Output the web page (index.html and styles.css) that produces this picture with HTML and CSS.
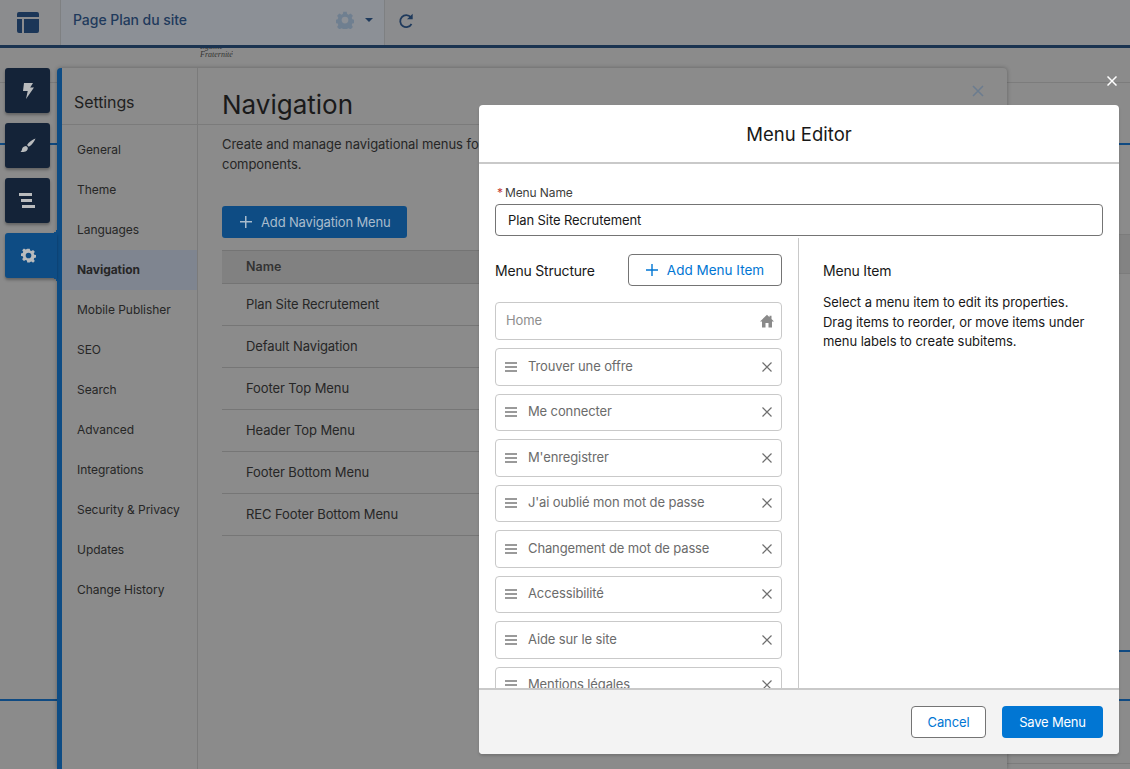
FILE: index.html
```html
<!DOCTYPE html>
<html lang="en">
<head>
    <meta charset="UTF-8">
    <meta name="viewport" content="width=device-width, initial-scale=1.0">
    <title>Menu Editor</title>
    <link rel="stylesheet" href="styles.css">
</head>
<body>

<!-- Barre du haut -->
<header class="topbar">
    <div class="topbar-home">
        <svg width="22" height="21" viewBox="0 0 22 21"><path fill="#1b3658" d="M2 0h18a2 2 0 0 1 2 2v3H0V2a2 2 0 0 1 2-2zM0 7h5v14H2a2 2 0 0 1-2-2zM7 7h15v12a2 2 0 0 1-2 2H7z"/></svg>
    </div>
    <div class="topbar-page">
        <span class="page-title">Page Plan du site</span>
        <svg class="page-gear" width="18" height="18" viewBox="0 0 24 24"><path fill="#6f7f90" fill-rule="evenodd" d="M9.800 1h4.400l.7 3 1.900.9 2.700-1.600 3 3.100-1.600 2.600.8 2 3 .7v4.400l-3 .7-.8 2 1.600 2.600-3 3.100-2.700-1.600-1.900.9-.7 3H9.800l-.7-3-1.900-.9-2.700 1.600-3-3.100 1.600-2.600-.8-2-3-.7v-4.400l3-.7.8-2-1.600-2.600 3-3.100 2.700 1.600 1.900-.9zM12 7.500a4.500 4.500 0 1 0 0 9 4.500 4.500 0 0 0 0-9z"/></svg>
        <span class="page-caret"></span>
    </div>
    <div class="topbar-refresh">
        <svg width="16" height="16" viewBox="0 0 16 16" fill="none"><path stroke="#1f3a5c" stroke-width="1.800" d="M12.800 4.200A6 6 0 1 0 13.500 11"/><path fill="#1f3a5c" d="M14.700 0.700v5.600H9z"/></svg>
    </div>
</header>

<!-- Fond de la page et traits de la maquette -->
<div class="bg-logo">Égalité<br>Fraternité</div>
<div class="bg-band"></div>
<div class="bg-line bg-line-grey" id="line-a"></div>
<div class="bg-line bg-line-grey" id="line-b"></div>
<div class="bg-line bg-line-grey" id="line-c"></div>
<div class="bg-line bg-line-grey" id="line-d"></div>
<div class="bg-line bg-line-blue" id="line-e"></div>
<div class="bg-line bg-line-blue" id="line-f"></div>
<div class="bg-line bg-line-blue" id="line-g"></div>
<div class="bg-line bg-line-blue" id="line-h"></div>
<div class="bg-line bg-line-blue" id="line-i"></div>

<!-- Onglets à gauche -->
<nav class="tabs">
    <div class="tab">
        <svg width="12" height="16" viewBox="0 0 12 16"><path fill="#b9bbbd" d="M2 0h9L8.200 4.500H12L4 16l1.700-8H1z"/></svg>
    </div>
    <div class="tab">
        <svg width="16" height="16" viewBox="0 0 16 16"><path fill="#b9bbbd" d="M15.500 0.500c-1 3-3.600 6.500-6.700 8.300L7 7C9 4 12.500 1.500 15.500 0.500zM6.200 8l1.700 1.700c0 2.500-2 3.800-3.500 4.100-1.200.3-3 .4-3.900.1 1.500-1 1.300-2.200 1.700-3.400C2.700 9 4.500 8 6.200 8z"/></svg>
    </div>
    <div class="tab">
        <span class="tab-lines"><i></i><i></i><i></i></span>
    </div>
    <div class="tab tab-active">
        <svg width="15" height="15" viewBox="0 0 24 24"><path fill="#b9bbbd" fill-rule="evenodd" d="M10 1h4l.6 3.100 2 .8 2.700-1.700 2.800 2.800-1.700 2.700.8 2 2.800.6v4l-2.800.6-.8 2 1.700 2.700-2.800 2.800-2.700-1.700-2 .8L14 23h-4l-.6-3.100-2-.8-2.700 1.700-2.800-2.800 1.700-2.700-.8-2-2.800-.6v-4l2.800-.6.8-2-1.700-2.700 2.800-2.800 2.700 1.700 2-.8zM12 7.500a4.500 4.500 0 1 0 0 9 4.500 4.500 0 0 0 0-9z"/></svg>
    </div>
</nav>

<!-- Panneau Settings (derrière la modale) -->
<section class="settings">
    <div class="settings-head">
        <div class="settings-title">Settings</div>
        <div class="settings-heading">Navigation</div>
        <svg class="settings-close" width="12" height="12" viewBox="0 0 12 12"><path stroke="#6b7c8f" stroke-width="1.500" d="M1 1l10 10M11 1L1 11"/></svg>
    </div>
    <div class="settings-body">
        <ul class="settings-menu">
            <li>General</li>
            <li>Theme</li>
            <li>Languages</li>
            <li class="selected">Navigation</li>
            <li>Mobile Publisher</li>
            <li>SEO</li>
            <li>Search</li>
            <li>Advanced</li>
            <li>Integrations</li>
            <li>Security &amp; Privacy</li>
            <li>Updates</li>
            <li>Change History</li>
        </ul>
        <div class="settings-main">
            <p class="settings-desc">Create and manage navigational menus for your site and components.</p>
            <div class="add-nav">
                <span class="add-nav-plus"></span>
                Add Navigation Menu
            </div>
            <div class="nav-table">
                <div class="nav-table-head">Name</div>
                <div class="nav-row">Plan Site Recrutement</div>
                <div class="nav-row">Default Navigation</div>
                <div class="nav-row">Footer Top Menu</div>
                <div class="nav-row">Header Top Menu</div>
                <div class="nav-row">Footer Bottom Menu</div>
                <div class="nav-row">REC Footer Bottom Menu</div>
            </div>
        </div>
    </div>
</section>

<svg class="modal-close" width="10" height="10" viewBox="0 0 10 10"><path stroke="#fff" stroke-width="1.500" d="M0.500 0.500l9 9M9.500 0.500l-9 9"/></svg>

<!-- Modale Menu Editor -->
<div class="modal">
    <div class="modal-header">Menu Editor</div>
    <div class="modal-body">
        <div class="name-field">
            <label class="name-label"><span class="required">*</span>Menu Name</label>
            <div class="name-input">Plan Site Recrutement</div>
        </div>
        <div class="columns">
            <div class="col-left">
                <div class="structure-head">
                    <span class="structure-title">Menu Structure</span>
                    <div class="btn btn-neutral btn-add">
                        <svg width="12" height="12" viewBox="0 0 12 12"><path stroke="#0176d3" stroke-width="1.400" d="M6 0v12M0 6h12"/></svg>
                        Add Menu Item
                    </div>
                </div>
                <div class="items">
                    <div class="item item-home">
                        <span class="item-label">Home</span>
                        <svg width="14" height="14" viewBox="0 0 14 14"><path fill="#8a8a8a" d="M7 .8l2.500 2.400V1.700h2v3.400L14 7.500h-2V13.500H8.500V9h-3v4.500H2V7.500H0z"/></svg>
                    </div>
                    <div class="item"><span class="grip"><i></i><i></i><i></i></span><span class="item-label">Trouver une offre</span><svg class="item-x" width="10" height="10" viewBox="0 0 10 10"><path stroke="#6f6f6f" stroke-width="1.200" d="M.5.500l9 9M9.500.500l-9 9"/></svg></div>
                    <div class="item"><span class="grip"><i></i><i></i><i></i></span><span class="item-label">Me connecter</span><svg class="item-x" width="10" height="10" viewBox="0 0 10 10"><path stroke="#6f6f6f" stroke-width="1.200" d="M.5.500l9 9M9.500.500l-9 9"/></svg></div>
                    <div class="item"><span class="grip"><i></i><i></i><i></i></span><span class="item-label">M'enregistrer</span><svg class="item-x" width="10" height="10" viewBox="0 0 10 10"><path stroke="#6f6f6f" stroke-width="1.200" d="M.5.500l9 9M9.500.500l-9 9"/></svg></div>
                    <div class="item"><span class="grip"><i></i><i></i><i></i></span><span class="item-label">J'ai oublié mon mot de passe</span><svg class="item-x" width="10" height="10" viewBox="0 0 10 10"><path stroke="#6f6f6f" stroke-width="1.200" d="M.5.500l9 9M9.500.500l-9 9"/></svg></div>
                    <div class="item"><span class="grip"><i></i><i></i><i></i></span><span class="item-label">Changement de mot de passe</span><svg class="item-x" width="10" height="10" viewBox="0 0 10 10"><path stroke="#6f6f6f" stroke-width="1.200" d="M.5.500l9 9M9.500.500l-9 9"/></svg></div>
                    <div class="item"><span class="grip"><i></i><i></i><i></i></span><span class="item-label">Accessibilité</span><svg class="item-x" width="10" height="10" viewBox="0 0 10 10"><path stroke="#6f6f6f" stroke-width="1.200" d="M.5.500l9 9M9.500.500l-9 9"/></svg></div>
                    <div class="item"><span class="grip"><i></i><i></i><i></i></span><span class="item-label">Aide sur le site</span><svg class="item-x" width="10" height="10" viewBox="0 0 10 10"><path stroke="#6f6f6f" stroke-width="1.200" d="M.5.500l9 9M9.500.500l-9 9"/></svg></div>
                    <div class="item"><span class="grip"><i></i><i></i><i></i></span><span class="item-label">Mentions légales</span><svg class="item-x" width="10" height="10" viewBox="0 0 10 10"><path stroke="#6f6f6f" stroke-width="1.200" d="M.5.500l9 9M9.500.500l-9 9"/></svg></div>
                </div>
            </div>
            <div class="col-right">
                <div class="detail-title">Menu Item</div>
                <p class="detail-text">Select a menu item to edit its properties. Drag items to reorder, or move items under menu labels to create subitems.</p>
            </div>
        </div>
    </div>
    <div class="modal-footer">
        <div class="btn btn-neutral btn-cancel">Cancel</div>
        <div class="btn btn-brand">Save Menu</div>
    </div>
</div>

</body>
</html>
```

FILE: styles.css
```css
* {
    box-sizing: border-box;
}

html,
body {
    height: 100%;
}

body {
    margin: 0;
    overflow: hidden;
    position: relative;
    background-color: #8b8b8b;
    font-family: Inter, "Liberation Sans", sans-serif;
    font-size: 12px;
    color: #1f1f1f;
}

/* Barre du haut */
.topbar {
    display: flex;
    height: 48px;
    background-color: #8b8c8e;
    border-bottom: 3px solid #1a3350;
}

.topbar-home {
    width: 61px;
    display: flex;
    align-items: center;
    justify-content: center;
    padding: 0 5px 0 0;
    border-right: 1px solid #7e8082;
}

.topbar-page {
    width: 324px;
    display: flex;
    align-items: center;
    padding: 0 11px 0 12px;
    background-color: #8c9096;
    border-right: 1px solid #7e8082;
}

.page-title {
    flex: 1;
    font-size: 14px;
    font-weight: 500;
    letter-spacing: -0.05px;
    color: #1f3a5c;
    padding-bottom: 7px;
}

.page-gear {
    margin-right: 11px;
    margin-bottom: 6px;
}

.page-caret {
    width: 0;
    height: 0;
    margin-bottom: 5px;
    border-left: 4px solid transparent;
    border-right: 4px solid transparent;
    border-top: 4px solid #1f3a5c;
}

.topbar-refresh {
    padding: 13px 0 0 13px;
}

/* Fond */
.bg-logo {
    position: absolute;
    left: 200px;
    top: 43px;
    font-family: "Liberation Serif", serif;
    font-style: italic;
    font-size: 8px;
    line-height: 8px;
    color: #333;
    clip-path: inset(5px 0 0 0);
}

.bg-band {
    position: absolute;
    left: 1119px;
    top: 234px;
    width: 11px;
    height: 39px;
    background-color: #838383;
    border-top: 1px solid #7c7c7c;
}

.bg-line {
    position: absolute;
    height: 1px;
}

.bg-line-grey {
    background-color: #7c7c7c;
}

.bg-line-blue {
    height: 2px;
    background-color: #0f4a82;
}

#line-a { left: 0; top: 82px; width: 60px; }
#line-b { left: 1007px; top: 82px; width: 123px; }
#line-c { left: 1119px; top: 273px; width: 11px; }
#line-d { left: 1007px; top: 763px; width: 123px; }
#line-e { left: 0; top: 143px; width: 60px; }
#line-f { left: 1119px; top: 143px; width: 11px; }
#line-g { left: 0; top: 699px; width: 60px; }
#line-h { left: 1119px; top: 650px; width: 11px; }
#line-i { left: 1119px; top: 699px; width: 11px; }

/* Onglets */
.tabs {
    position: absolute;
    left: 5px;
    top: 68px;
    z-index: 2;
    display: flex;
    flex-direction: column;
    gap: 10px;
}

.tab {
    position: relative;
    width: 45px;
    height: 45px;
    display: flex;
    align-items: center;
    justify-content: center;
    background-color: #142338;
    border-radius: 3px;
    box-shadow: 0 2px 3px rgba(0, 0, 0, 0.3);
}

.tab-active {
    width: 52px;
    padding-right: 6px;
    background-color: #0e4c84;
    border-radius: 3px 0 0 3px;
}

/* Raccords arrondis entre l'onglet actif et le bord bleu */
.tab-active::before,
.tab-active::after {
    content: "";
    position: absolute;
    left: 47px;
    width: 5px;
    height: 5px;
}

.tab-active::before {
    top: -5px;
    background: radial-gradient(circle at 0 0, transparent 5px, #0e4c84 5px);
}

.tab-active::after {
    bottom: -5px;
    background: radial-gradient(circle at 0 100%, transparent 5px, #0e4c84 5px);
}

.tab-lines {
    width: 16px;
    display: flex;
    flex-direction: column;
    gap: 3px;
    margin-left: -1px;
}

.tab-lines i {
    display: block;
    height: 3px;
    background-color: #b9bbbd;
}

.tab-lines i:nth-child(1) { width: 13px; }
.tab-lines i:nth-child(2) { width: 11px; margin-left: 2px; }
.tab-lines i:nth-child(3) { width: 13px; margin-left: 3px; }

/* Panneau Settings */
.settings {
    position: absolute;
    left: 57px;
    top: 68px;
    width: 950px;
    height: 701px;
    display: flex;
    flex-direction: column;
    background-color: #8b8b8b;
    border-left: 5px solid #0e4c84;
    border-top-left-radius: 4px;
    border-top-right-radius: 4px;
    box-shadow: 0 0 4px rgba(0, 0, 0, 0.3);
}

.settings-head {
    height: 57px;
    display: flex;
    align-items: center;
    border-bottom: 1px solid #7b7b7b;
}

.settings-title {
    width: 136px;
    height: 100%;
    padding: 24px 0 0 12px;
    font-size: 16px;
    letter-spacing: -0.1px;
    border-right: 1px solid #7b7b7b;
}

.settings-heading {
    flex: 1;
    padding: 0 0 0 24px;
    margin-top: 17px;
    font-size: 26px;
    line-height: 32px;
    color: #1a1a1a;
}

.settings-close {
    margin: 0 23px 10px 0;
}

.settings-body {
    flex: 1;
    display: flex;
}

.settings-menu {
    width: 136px;
    margin: 0;
    padding: 5px 0 0;
    list-style: none;
    border-right: 1px solid #7b7b7b;
}

.settings-menu li {
    height: 40px;
    line-height: 40px;
    padding-left: 15px;
    letter-spacing: -0.05px;
    color: #262626;
}

.settings-menu .selected {
    font-weight: 700;
    background-color: #7f8590;
}

.settings-main {
    flex: 1;
    padding: 0 0 0 24px;
}

.settings-desc {
    width: 400px;
    margin: 0;
    padding-top: 9px;
    font-size: 13px;
    line-height: 20px;
    letter-spacing: -0.05px;
    color: #262626;
}

.add-nav {
    width: 185px;
    height: 32px;
    margin-top: 32px;
    display: flex;
    align-items: center;
    gap: 9px;
    padding-left: 18px;
    font-size: 13px;
    letter-spacing: -0.15px;
    color: #a9bccd;
    background-color: #0e4c84;
    border-radius: 3px;
}

.add-nav-plus {
    width: 12px;
    height: 12px;
    background:
        linear-gradient(#a9bccd, #a9bccd) center / 100% 1.500px no-repeat,
        linear-gradient(#a9bccd, #a9bccd) center / 1.500px 100% no-repeat;
}

.nav-table {
    margin-top: 12px;
    width: 400px;
}

.nav-table-head {
    height: 34px;
    line-height: 32px;
    padding-left: 24px;
    font-size: 12.500px;
    font-weight: 600;
    color: #333;
    background-color: #818181;
    border-top: 1px solid #747474;
    border-bottom: 1px solid #747474;
}

.nav-row {
    height: 42px;
    line-height: 41px;
    padding-left: 24px;
    font-size: 13px;
    letter-spacing: -0.1px;
    color: #262626;
    border-bottom: 1px solid #767676;
}

/* Modale */
.modal-close {
    position: absolute;
    left: 1107px;
    top: 76px;
    z-index: 3;
}

.modal {
    position: absolute;
    left: 479px;
    top: 105px;
    z-index: 3;
    width: 640px;
    height: 649px;
    display: flex;
    flex-direction: column;
    background-color: #fff;
    border-radius: 4px;
    box-shadow: 0 2px 3px rgba(0, 0, 0, 0.16);
}

.modal-header {
    height: 59px;
    padding-top: 18px;
    text-align: center;
    font-size: 18.500px;
    line-height: 23px;
    color: #181818;
    border-bottom: 2px solid #c9c9c9;
}

.modal-body {
    flex: 1;
    min-height: 0;
    display: flex;
    flex-direction: column;
}

.name-field {
    padding: 21px 16px 0;
}

.name-label {
    display: block;
    height: 19px;
    line-height: 16px;
    letter-spacing: -0.1px;
    color: #3e3e3c;
}

.required {
    color: #c23934;
    margin-right: 2px;
    margin-left: 2px;
}

.name-input {
    height: 32px;
    line-height: 30px;
    padding-left: 12px;
    font-size: 13px;
    letter-spacing: -0.1px;
    color: #181818;
    border: 1px solid #747474;
    border-radius: 4px;
}

.columns {
    flex: 1;
    min-height: 0;
    display: flex;
    margin-top: 2px;
}

.col-left {
    width: 320px;
    padding: 16px 16px 0;
    overflow: hidden;
    border-right: 1px solid #c9c9c9;
}

.structure-head {
    display: flex;
    align-items: center;
    justify-content: space-between;
    margin-bottom: 16px;
}

.structure-title {
    font-size: 14px;
    letter-spacing: -0.2px;
    color: #181818;
}

.btn {
    display: flex;
    align-items: center;
    justify-content: center;
    height: 32px;
    font-size: 13px;
    border-radius: 4px;
}

.btn-neutral {
    color: #0176d3;
    background-color: #fff;
    border: 1px solid #747474;
}

.btn-add {
    width: 154px;
    gap: 9px;
    font-size: 13.500px;
}

.items {
    display: flex;
    flex-direction: column;
    gap: 8px;
}

.item {
    flex: none;
    height: 37.500px;
    display: flex;
    align-items: center;
    padding: 0 9px;
    font-size: 13px;
    letter-spacing: -0.12px;
    color: #6b6b6b;
    border: 1px solid #c9c9c9;
    border-radius: 4px;
}

.item-home {
    height: 38px;
    justify-content: space-between;
    padding: 0 7px 0 10px;
    color: #8e8e8e;
}

.grip {
    width: 12px;
    display: flex;
    flex-direction: column;
    gap: 2px;
    margin-right: 11px;
}

.grip i {
    display: block;
    height: 2px;
    background-color: #9a9a9a;
}

.item-label {
    flex: 1;
    padding-bottom: 2px;
}

.col-right {
    flex: 1;
    padding: 24px 24px 0;
}

.detail-title {
    font-size: 14px;
    line-height: 18px;
    letter-spacing: -0.2px;
    color: #181818;
}

.detail-text {
    margin: 13px 0 0;
    font-size: 13px;
    line-height: 19.500px;
    letter-spacing: -0.05px;
    color: #181818;
}

.modal-footer {
    height: 66px;
    display: flex;
    align-items: center;
    justify-content: flex-end;
    gap: 16px;
    padding: 0 16px;
    background-color: #f3f3f3;
    border-top: 2px solid #c9c9c9;
    border-radius: 0 0 4px 4px;
}

.btn-cancel {
    width: 75px;
    letter-spacing: -0.1px;
}

.btn-brand {
    width: 101px;
    letter-spacing: -0.2px;
    color: #fff;
    background-color: #0176d3;
}
```
